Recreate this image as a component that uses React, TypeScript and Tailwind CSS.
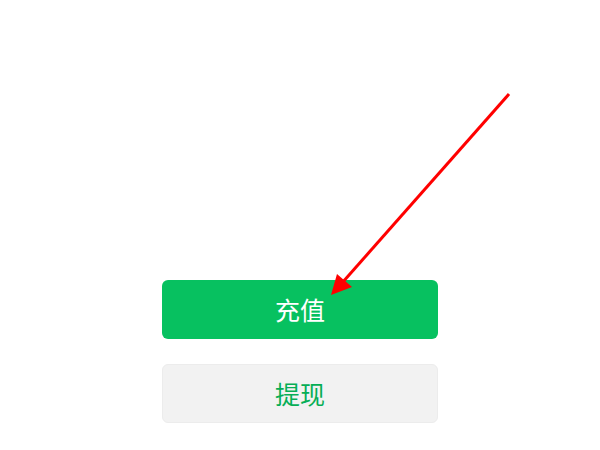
export default function App() {
  return (
    <div
      className="relative w-[600px] h-[450px] bg-white overflow-hidden"
      style={{ fontFamily: '"Noto Sans CJK SC", "Noto Sans", sans-serif' }}
    >
      <div className="flex flex-col items-center pt-[280px] gap-[25px]">
        <button className="w-[276px] h-[59px] rounded-[6px] bg-[#07c160] text-white text-[25px] leading-none">
          充值
        </button>
        <button className="w-[276px] h-[59px] rounded-[6px] bg-[#f2f2f2] text-[#06ae56] text-[25px] leading-none border border-[#ececec]">
          提现
        </button>
      </div>

      {/* annotation arrow */}
      <svg className="absolute left-0 top-0 pointer-events-none" width="600" height="450">
        <line x1="509" y1="94" x2="342" y2="283" stroke="#ff0000" strokeWidth="3" />
        <polygon points="331,295 337,274 352,287" fill="#ff0000" />
      </svg>
    </div>
  );
}
